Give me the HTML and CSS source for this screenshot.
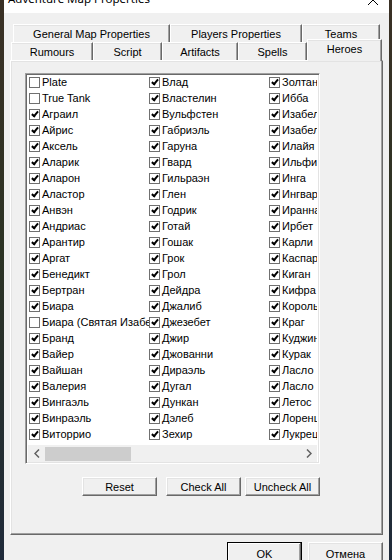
FILE: index.html
```html
<!DOCTYPE html>
<html lang="ru">
<head>
    <meta charset="UTF-8">
    <meta name="viewport" content="width=device-width, initial-scale=1.0">
    <title>Adventure Map Properties</title>
    <link rel="stylesheet" href="styles.css">
</head>
<body>
    <div class="window">
        <div class="titlebar">
            <span class="title">Adventure Map Properties</span>
            <svg class="close" width="12" height="12" viewBox="0 0 12 12">
                <path d="M1 1 L11 11 M11 1 L1 11" stroke="#000" stroke-width="1" fill="none"/>
            </svg>
        </div>

        <div class="tabrow back">
            <div class="tab tab-general">General Map Properties</div>
            <div class="tab tab-players">Players Properties</div>
            <div class="tab tab-teams">Teams</div>
        </div>
        <div class="tabrow front">
            <div class="tab tab-rumours">Rumours</div>
            <div class="tab tab-script">Script</div>
            <div class="tab tab-artifacts">Artifacts</div>
            <div class="tab tab-spells">Spells</div>
            <div class="tab tab-heroes active">Heroes</div>
        </div>

        <div class="panel">
            <div class="list">
                <div class="items">
                    <div class="item"><span class="cb"></span>Plate</div>
                    <div class="item"><span class="cb"></span>True Tank</div>
                    <div class="item"><span class="cb on"></span>Аграил</div>
                    <div class="item"><span class="cb on"></span>Айрис</div>
                    <div class="item"><span class="cb on"></span>Аксель</div>
                    <div class="item"><span class="cb on"></span>Аларик</div>
                    <div class="item"><span class="cb on"></span>Аларон</div>
                    <div class="item"><span class="cb on"></span>Аластор</div>
                    <div class="item"><span class="cb on"></span>Анвэн</div>
                    <div class="item"><span class="cb on"></span>Андриас</div>
                    <div class="item"><span class="cb on"></span>Арантир</div>
                    <div class="item"><span class="cb on"></span>Аргат</div>
                    <div class="item"><span class="cb on"></span>Бенедикт</div>
                    <div class="item"><span class="cb on"></span>Бертран</div>
                    <div class="item"><span class="cb on"></span>Биара</div>
                    <div class="item"><span class="cb"></span><span class="clip">Биара (Святая Изабель)</span></div>
                    <div class="item"><span class="cb on"></span>Бранд</div>
                    <div class="item"><span class="cb on"></span>Вайер</div>
                    <div class="item"><span class="cb on"></span>Вайшан</div>
                    <div class="item"><span class="cb on"></span>Валерия</div>
                    <div class="item"><span class="cb on"></span>Вингаэль</div>
                    <div class="item"><span class="cb on"></span>Винраэль</div>
                    <div class="item"><span class="cb on"></span>Виторрио</div>

                    <div class="item"><span class="cb on"></span>Влад</div>
                    <div class="item"><span class="cb on"></span>Властелин</div>
                    <div class="item"><span class="cb on"></span>Вульфстен</div>
                    <div class="item"><span class="cb on"></span>Габриэль</div>
                    <div class="item"><span class="cb on"></span>Гаруна</div>
                    <div class="item"><span class="cb on"></span>Гвард</div>
                    <div class="item"><span class="cb on"></span>Гильраэн</div>
                    <div class="item"><span class="cb on"></span>Глен</div>
                    <div class="item"><span class="cb on"></span>Годрик</div>
                    <div class="item"><span class="cb on"></span>Готай</div>
                    <div class="item"><span class="cb on"></span>Гошак</div>
                    <div class="item"><span class="cb on"></span>Грок</div>
                    <div class="item"><span class="cb on"></span>Грол</div>
                    <div class="item"><span class="cb on"></span>Дейдра</div>
                    <div class="item"><span class="cb on"></span>Джалиб</div>
                    <div class="item"><span class="cb on"></span>Джезебет</div>
                    <div class="item"><span class="cb on"></span>Джир</div>
                    <div class="item"><span class="cb on"></span>Джованни</div>
                    <div class="item"><span class="cb on"></span>Дираэль</div>
                    <div class="item"><span class="cb on"></span>Дугал</div>
                    <div class="item"><span class="cb on"></span>Дункан</div>
                    <div class="item"><span class="cb on"></span>Дэлеб</div>
                    <div class="item"><span class="cb on"></span>Зехир</div>

                    <div class="item"><span class="cb on"></span>Золтан</div>
                    <div class="item"><span class="cb on"></span>Ибба</div>
                    <div class="item"><span class="cb on"></span>Изабель</div>
                    <div class="item"><span class="cb on"></span>Изабель (Лич)</div>
                    <div class="item"><span class="cb on"></span>Илайя</div>
                    <div class="item"><span class="cb on"></span>Ильфина</div>
                    <div class="item"><span class="cb on"></span>Инга</div>
                    <div class="item"><span class="cb on"></span>Ингвар</div>
                    <div class="item"><span class="cb on"></span>Иранна</div>
                    <div class="item"><span class="cb on"></span>Ирбет</div>
                    <div class="item"><span class="cb on"></span>Карли</div>
                    <div class="item"><span class="cb on"></span>Каспар</div>
                    <div class="item"><span class="cb on"></span>Киган</div>
                    <div class="item"><span class="cb on"></span>Кифра</div>
                    <div class="item"><span class="cb on"></span>Король Тиеру</div>
                    <div class="item"><span class="cb on"></span>Краг</div>
                    <div class="item"><span class="cb on"></span>Куджин</div>
                    <div class="item"><span class="cb on"></span>Курак</div>
                    <div class="item"><span class="cb on"></span>Ласло</div>
                    <div class="item"><span class="cb on"></span>Ласло</div>
                    <div class="item"><span class="cb on"></span>Летос</div>
                    <div class="item"><span class="cb on"></span>Лоренцо</div>
                    <div class="item"><span class="cb on"></span>Лукреция</div>
                </div>
                <div class="hscroll">
                    <div class="sb-btn">
                        <svg width="6" height="9" viewBox="0 0 6 9"><path d="M5 0.5 L1 4.5 L5 8.5" stroke="#606060" stroke-width="1.5" fill="none"/></svg>
                    </div>
                    <div class="sb-track"><div class="sb-thumb"></div></div>
                    <div class="sb-btn">
                        <svg width="6" height="9" viewBox="0 0 6 9"><path d="M1 0.5 L5 4.5 L1 8.5" stroke="#606060" stroke-width="1.5" fill="none"/></svg>
                    </div>
                </div>
            </div>
            <div class="list-buttons">
                <button class="btn btn-reset">Reset</button>
                <button class="btn btn-check">Check All</button>
                <button class="btn">Uncheck All</button>
            </div>
        </div>

        <div class="dialog-buttons">
            <button class="btn big default">OK</button>
            <button class="btn big">Отмена</button>
        </div>
    </div>
</body>
</html>
```

FILE: styles.css
```css
body {
    margin: 0;
    padding: 0;
    height: 560px;
    overflow: hidden;
    background: linear-gradient(180deg, #3a3025 0%, #2c3324 45%, #1f2a3a 100%);
    font-family: "Liberation Sans", Arial, sans-serif;
    font-size: 11px;
    color: #000;
}
.window {
    margin-left: 4px;
    width: 385px;
    height: 560px;
    background: #f0f0f0;
}
.titlebar {
    height: 13px;
    background: #ffffff;
    overflow: hidden;
    display: flex;
    justify-content: space-between;
    align-items: flex-start;
    padding: 0 10px 0 4px;
}
.title {
    font-family: "Noto Sans", "Open Sans", sans-serif;
    font-size: 11.5px;
    line-height: 16px;
    margin-top: -9px;
    color: #000;
}
.close {
    margin-top: -6px;
}
.tabrow {
    display: flex;
    height: 18px;
}
.tabrow.back {
    margin-top: 11px;
    margin-left: 9px;
}
.tabrow.front {
    margin-left: 7px;
    align-items: flex-end;
}
.tab {
    box-sizing: border-box;
    height: 18px;
    background: #f0f0f0;
    border-top: 1px solid #ffffff;
    border-left: 1px solid #ffffff;
    border-right: 1px solid #696969;
    box-shadow: inset -1px 0 #a0a0a0, inset 0 1px #e3e3e3;
    display: flex;
    justify-content: center;
    align-items: center;
    white-space: nowrap;
    padding-top: 1px;
}
.tab-general { width: 157px; }
.tab-players { width: 132px; }
.tab-teams { width: 78px; }
.tab-rumours { width: 82px; }
.tab-script { width: 69px; }
.tab-artifacts { width: 76px; }
.tab-spells { width: 69px; }
.tab-heroes { width: 75px; }
.tab.active {
    height: 22px;
    margin-bottom: -1px;
    align-items: flex-start;
    padding-top: 3px;
    position: relative;
    z-index: 2;
}
.panel {
    box-sizing: border-box;
    margin-left: 6px;
    width: 373px;
    height: 475px;
    border-top: 1px solid #ffffff;
    border-left: 1px solid #ffffff;
    border-right: 1px solid #696969;
    border-bottom: 1px solid #696969;
    box-shadow: inset -1px -1px #a0a0a0, inset 1px 1px #e3e3e3;
    padding: 12px 0 0 14px;
}
.list {
    box-sizing: border-box;
    width: 295px;
    height: 391px;
    background: #ffffff;
    border-top: 1px solid #a0a0a0;
    border-left: 1px solid #a0a0a0;
    border-right: 1px solid #ffffff;
    border-bottom: 1px solid #ffffff;
    box-shadow: inset 1px 1px #696969, inset -1px -1px #e3e3e3;
    padding: 0 2px 1px 2px;
    display: flex;
    flex-direction: column;
}
.items {
    height: 368px;
    padding-left: 1px;
    display: grid;
    grid-auto-flow: column;
    grid-template-rows: repeat(23, 16px);
    grid-auto-columns: 120px;
    overflow: hidden;
}
.item {
    display: flex;
    align-items: center;
    gap: 2px;
    white-space: nowrap;
    overflow: hidden;
}
.clip {
    overflow: hidden;
    min-width: 0;
}
.cb {
    flex: none;
    position: relative;
    box-sizing: border-box;
    width: 11px;
    height: 11px;
    border: 1px solid #707070;
    background: #ffffff;
}
.cb.on::after {
    content: "";
    position: absolute;
    left: 3px;
    top: 0px;
    width: 2px;
    height: 5px;
    border: solid #000;
    border-width: 0 2px 2px 0;
    transform: rotate(40deg);
}
.hscroll {
    margin-top: auto;
    height: 17px;
    background: #f0f0f0;
    display: flex;
}
.sb-btn {
    width: 17px;
    display: flex;
    justify-content: center;
    align-items: center;
}
.sb-track {
    flex: 1;
    padding: 2px 0 1px 0;
}
.sb-thumb {
    width: 86px;
    height: 100%;
    background: #cdcdcd;
}
.list-buttons {
    width: 295px;
    margin-top: 13px;
    display: flex;
    justify-content: flex-end;
}
.btn {
    box-sizing: border-box;
    width: 75px;
    height: 19px;
    padding: 0;
    font-family: "Liberation Sans", Arial, sans-serif;
    font-size: 11px;
    color: #000;
    background: #f0f0f0;
    border-top: 1px solid #ffffff;
    border-left: 1px solid #ffffff;
    border-right: 1px solid #696969;
    border-bottom: 1px solid #696969;
    box-shadow: inset -1px -1px #a0a0a0, inset 1px 1px #e3e3e3;
}
.btn-reset {
    margin-right: 9px;
}
.btn-check {
    margin-right: 4px;
}
.dialog-buttons {
    margin-top: 7px;
    padding-right: 6px;
    display: flex;
    justify-content: flex-end;
    gap: 6px;
}
.btn.big {
    height: 23px;
}
.btn.default {
    border: 1px solid #000;
    box-shadow: inset -1px -1px #696969, inset 1px 1px #ffffff, inset -2px -2px #a0a0a0;
}
```
